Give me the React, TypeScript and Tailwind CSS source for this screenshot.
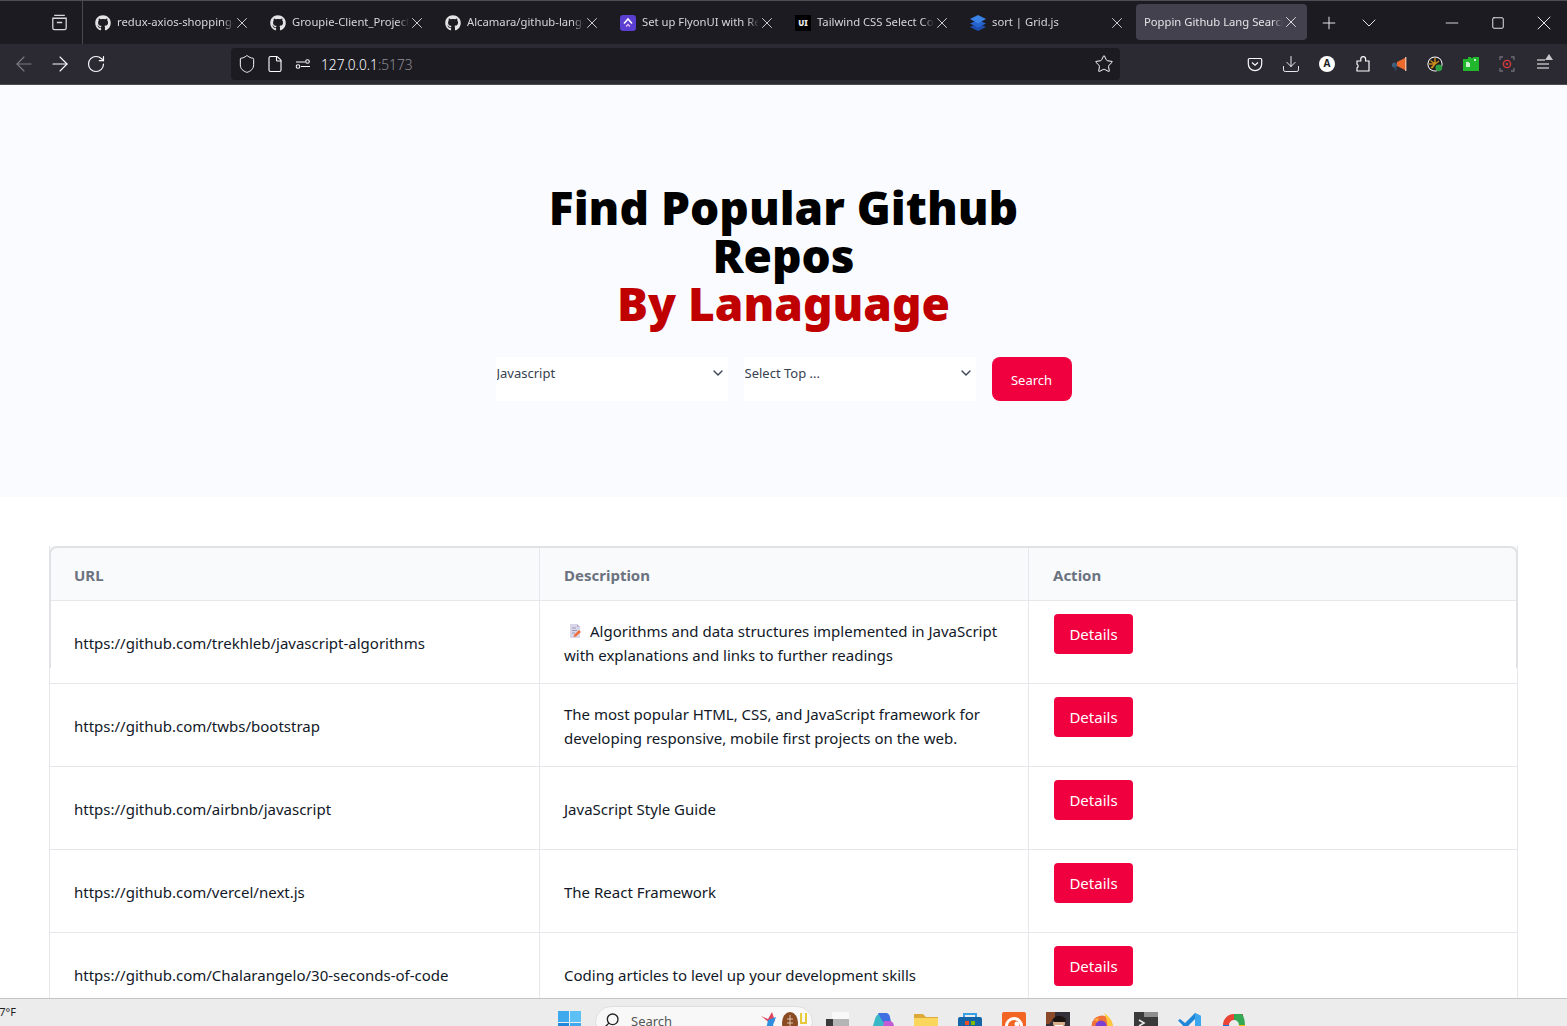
import React from 'react';
import { FaGithub } from 'react-icons/fa';
import {
  ArrowLeft,
  ArrowRight,
  ChevronDown,
  Download,
  File,
  Minus,
  Plus,
  RotateCw,
  Search,
  Shield,
  Square,
  Star,
  X,
} from 'lucide-react';

const fontClass = "font-['Noto_Sans','Open_Sans',sans-serif]";

const FlyonIcon = () => (
  <svg width="16" height="16" viewBox="0 0 16 16" className="shrink-0">
    <rect width="16" height="16" rx="3" fill="#5b3fd0" />
    <path d="M4 8.5 8 4l4 4.5" fill="none" stroke="#fff" strokeWidth="1.6" />
    <path d="M6 11.5 8 9.5l2 2" fill="none" stroke="#e6b8f5" strokeWidth="1.4" />
  </svg>
);

const UiIcon = () => (
  <span className="flex h-4 w-4 shrink-0 items-center justify-center bg-black text-[8px] font-black text-[#e8e8e8]">
    UI
  </span>
);

const GridIcon = () => (
  <svg width="16" height="16" viewBox="0 0 16 16" className="shrink-0">
    <path d="M8 8.5 0 12l8 4 8-4z" fill="#1d4fb0" />
    <path d="M8 5 0 8.5l8 4 8-4z" fill="#2563cf" />
    <path d="M8 0 0 4l8 4.5L16 4z" fill="#3b82e6" />
  </svg>
);

const tabs = [
  { title: 'redux-axios-shopping-cart', icon: <FaGithub className="h-4 w-4 shrink-0 text-[#e4e4e6]" /> },
  { title: 'Groupie-Client_Project', icon: <FaGithub className="h-4 w-4 shrink-0 text-[#e4e4e6]" /> },
  { title: 'Alcamara/github-lang-search', icon: <FaGithub className="h-4 w-4 shrink-0 text-[#e4e4e6]" /> },
  { title: 'Set up FlyonUI with React', icon: <FlyonIcon /> },
  { title: 'Tailwind CSS Select Component', icon: <UiIcon /> },
  { title: 'sort | Grid.js', icon: <GridIcon /> },
];

const repos = [
  {
    url: 'https://github.com/trekhleb/javascript-algorithms',
    description: 'Algorithms and data structures implemented in JavaScript with explanations and links to further readings',
    memo: true,
  },
  {
    url: 'https://github.com/twbs/bootstrap',
    description: 'The most popular HTML, CSS, and JavaScript framework for developing responsive, mobile first projects on the web.',
  },
  { url: 'https://github.com/airbnb/javascript', description: 'JavaScript Style Guide' },
  { url: 'https://github.com/vercel/next.js', description: 'The React Framework' },
  {
    url: 'https://github.com/Chalarangelo/30-seconds-of-code',
    description: 'Coding articles to level up your development skills',
  },
];

const Tabs = () => (
  <div className="flex h-[44px] shrink-0 border-t border-[#4d4d55] bg-[#1c1b22]">
    <div className="flex w-[87px] shrink-0 items-center">
      <div className="flex h-[43px] w-[83px] items-center justify-center border-r border-[#4a4950] pl-[37px]">
        <svg width="17" height="17" viewBox="0 0 16 16" fill="none" stroke="#d8d8dc" strokeWidth="1.2">
          <path d="M3 1.2h10M1.7 4h12.6v9.2a1.6 1.6 0 0 1-1.6 1.6H3.3a1.6 1.6 0 0 1-1.6-1.6zM5.5 8h5" />
        </svg>
      </div>
    </div>
    {tabs.map((tab) => (
      <div key={tab.title} className="flex h-[43px] w-[175px] shrink-0 items-center pl-2 text-[11.25px] text-[#d6d6da]">
        {tab.icon}
        <span className="ml-[6px] w-[117px] overflow-hidden whitespace-nowrap [mask-image:linear-gradient(to_right,black_90%,transparent)]">
          {tab.title}
        </span>
        <X className="-ml-px h-[18px] w-[18px] shrink-0" strokeWidth={1.25} />
      </div>
    ))}
    <div className="-ml-px mt-[3px] flex h-9 w-[171px] shrink-0 items-center rounded bg-[#42414d] pl-2 text-[11.25px] text-[#e4e4e8]">
      <span className="w-[139px] overflow-hidden whitespace-nowrap [mask-image:linear-gradient(to_right,black_92%,transparent)]">
        Poppin Github Lang Search
      </span>
      <X className="-ml-px h-[18px] w-[18px] shrink-0" strokeWidth={1.25} />
    </div>
    <div className="flex flex-1 items-center text-[#e4e4e8]">
      <Plus className="ml-3 h-5 w-5" strokeWidth={1.2} />
      <ChevronDown className="ml-[18px] h-6 w-6" strokeWidth={1} />
      <Minus className="ml-[61px] h-5 w-5" strokeWidth={1.1} />
      <Square className="ml-[29px] h-[14px] w-[14px]" strokeWidth={1.7} />
      <X className="ml-[27px] h-6 w-6" strokeWidth={1} />
    </div>
  </div>
);

const Toolbar = () => (
  <div className="flex h-[41px] shrink-0 items-center border-b border-[#4a4950] bg-[#2b2a33] pb-px text-[#fbfbfe]">
    <ArrowLeft className="ml-3 h-6 w-6 text-[#7c7b84]" strokeWidth={1.1} />
    <ArrowRight className="ml-3 h-6 w-6" strokeWidth={1.1} />
    <RotateCw className="ml-[14px] h-5 w-5" strokeWidth={1.4} />
    <div className="ml-[125px] flex h-8 w-[889px] items-center rounded bg-[#1c1b22] pl-[6px] pr-[6px]">
      <Shield className="h-5 w-5" strokeWidth={1.2} />
      <File className="ml-[9px] h-[18px] w-[18px]" strokeWidth={1.5} />
      <svg width="16" height="16" viewBox="0 0 16 16" fill="none" stroke="#fbfbfe" strokeWidth="1.1" className="ml-[11px]">
        <path d="M1 6h9M6 10.5h9" />
        <circle cx="12.5" cy="5.5" r="1.8" />
        <circle cx="3" cy="10.5" r="1.8" />
      </svg>
      <span className="ml-[10px] pt-[3px] text-[13.7px] font-light">
        127.0.0.1<span className="text-[#8f8f95]">:5173</span>
      </span>
      <Star className="ml-auto h-5 w-5" strokeWidth={1.2} />
    </div>
    <div className="ml-[127px] flex items-center gap-[20px]">
      <svg width="16" height="16" viewBox="0 0 16 16" fill="none" stroke="#fbfbfe" strokeWidth="1.2">
        <path d="M2.5 2.5h11A1.2 1.2 0 0 1 14.7 3.7V8A6.7 6.7 0 0 1 1.3 8V3.7a1.2 1.2 0 0 1 1.2-1.2z" />
        <path d="M5 6.5 8 9.3l3-2.8" />
      </svg>
      <Download className="-m-[2px] h-5 w-5" strokeWidth={1.1} />
      <span className="flex h-4 w-4 items-center justify-center rounded-full bg-white text-[10px] font-bold text-[#1c1b22]">A</span>
      <svg width="16" height="16" viewBox="0 0 16 16" fill="none" stroke="#fbfbfe" strokeWidth="1.2" className="overflow-visible">
        <path d="M2 5H5.8V3a2.4 2.4 0 0 1 4.8 0v2H14v10H2v-3.2a2 2 0 0 0 0-3.6z" />
      </svg>
      <svg width="16" height="16" viewBox="0 0 16 16">
        <path d="M6 6 14 2v12L6 10z" fill="#ee6a2c" />
        <rect x="14" y="1" width="1.4" height="14" fill="#f2b7a0" />
        <circle cx="3.5" cy="9" r="2.6" fill="#3d5d7a" />
        <rect x="3.5" y="10.5" width="2" height="4" fill="#2f4860" />
      </svg>
      <svg width="16" height="16" viewBox="0 0 16 16">
        <circle cx="8" cy="8" r="7.6" fill="#fff" />
        <circle cx="8" cy="8" r="6.6" fill="#1c1b22" />
        <path d="M8 2v6l4-3M2 8h6l-3 4M3.5 4.5 8 8M4 12l3-3" stroke="#c98a1e" strokeWidth="1.5" fill="none" />
        <circle cx="11.8" cy="11.8" r="3.4" fill="#2ea043" />
      </svg>
      <svg width="17" height="16" viewBox="0 0 17 16" className="-mr-px">
        <path d="M0 3h5V1h3v1h2V1h6v14H0z" fill="#21b82d" />
        <path d="M3 6h3v1h1v4H3zM11 3h2v2h-2z" fill="#c9f5cc" />
      </svg>
      <svg width="16" height="16" viewBox="0 0 16 16" fill="none">
        <path d="M1 4V1h3M12 1h3v3M15 12v3h-3M4 15H1v-3" stroke="#6f6e76" strokeWidth="1.3" />
        <circle cx="8" cy="8" r="3.6" stroke="#d83b3b" strokeWidth="1.4" />
        <circle cx="8" cy="8" r="1.2" fill="#d83b3b" />
      </svg>
      <svg width="16" height="16" viewBox="0 0 16 16" fill="none" className="overflow-visible">
        <path d="M2 4h8M2 8h12M2 12h12" stroke="#fbfbfe" strokeWidth="1.2" />
        <path d="M14 -2 18 4H10z" fill="#c8c8cc" />
      </svg>
    </div>
  </div>
);

const SelectBox = ({ label }: { label: string }) => (
  <div className="relative h-11 w-[232px]">
    <select className="h-11 w-full appearance-none bg-white pb-[10px] pl-px text-[13px] text-[#374151] outline-none">
      <option>{label}</option>
    </select>
    <ChevronDown className="pointer-events-none absolute right-[2px] top-2 h-4 w-4 text-[#374151]" strokeWidth={2} />
  </div>
);

const Hero = () => (
  <section className="flex flex-col items-center bg-[#fafbfe] pb-[96px] pt-[98px]">
    <h1 className="w-[576px] text-center text-[46px] font-black leading-[48px] text-black">
      Find Popular Github Repos
      <br />
      <span className="text-[#c00000]">By Lanaguage</span>
    </h1>
    <div className="mt-[30px] flex gap-4">
      <SelectBox label="Javascript" />
      <SelectBox label="Select Top ..." />
      <button className="h-11 w-20 rounded-lg bg-[#f0003f] pt-1 text-[13px] text-white">Search</button>
    </div>
  </section>
);

const MemoIcon = () => (
  <svg width="14" height="16" viewBox="2 0 12 16" className="ml-1 mr-2 inline-block align-[-2px]">
    <path d="M3 1h7l3 3v11H3z" fill="#d9d6e8" />
    <path d="M10 1l3 3h-3z" fill="#b5b1cc" />
    <path d="M5 5h4M5 7.5h5M5 10h3" stroke="#9e9ab5" strokeWidth="1" />
    <path d="M7 12l5-5 2 2-5 4.5-2.4.6z" fill="#f0703c" />
  </svg>
);

const RepoTable = () => (
  <div className="relative mx-[49px] mt-[49px]">
    <div className="pointer-events-none absolute inset-x-0 top-0 h-[122px] rounded-t-lg border-x-2 border-t-2 border-[#e0e2e6]" />
    <table className="w-full table-fixed border-x border-[#e5e7eb] text-[15px] text-[#111827]">
      <thead>
        <tr className="h-[54px] border-b border-[#e5e7eb] bg-[#f9fafc] text-left font-bold text-[#6b7280]">
          <th className="w-[490px] px-6 pt-1">URL</th>
          <th className="w-[489px] border-l border-[#e5e7eb] px-6 pt-1">Description</th>
          <th className="border-l border-[#e5e7eb] px-6 pt-1">Action</th>
        </tr>
      </thead>
      <tbody>
        {repos.map((repo) => (
          <tr key={repo.url} className="h-[83px] border-b border-[#e5e7eb]">
            <td className="px-6 pt-1">{repo.url}</td>
            <td className="border-l border-[#e5e7eb] px-6 pt-[2px] leading-6">
              {repo.memo && <MemoIcon />}
              {repo.description}
            </td>
            <td className="border-l border-[#e5e7eb] px-6 pb-[29px] pt-[13px] align-top">
              <button className="ml-px h-10 w-[79px] rounded bg-[#f0003f] pt-[2px] text-white">Details</button>
            </td>
          </tr>
        ))}
      </tbody>
    </table>
  </div>
);

const taskbarIcons = [
  <svg key="view" width="24" height="24" viewBox="0 0 24 24">
    <rect x="6" y="0" width="17" height="16" fill="#f8f8f8" />
    <rect x="0" y="7" width="16" height="17" fill="#3b3b3b" />
    <rect x="7" y="7" width="16" height="17" fill="#b5b5b5" />
  </svg>,
  <svg key="copilot" width="24" height="24" viewBox="0 0 24 24">
    <path d="M0 24 5 7q2-6 7-6h5l-6 23z" fill="#3ab8c8" />
    <path d="M2 16h10l-2 8H0z" fill="#8ccf4d" />
    <path d="M8 1h8q3 0 4 4l1 5H13z" fill="#3f6fe0" />
    <path d="M14 9h5q5 0 5 6v9H12z" fill="#c25bd6" />
  </svg>,
  <svg key="folder" width="24" height="24" viewBox="0 0 24 24">
    <path d="M0 2h9l3 3h12v19H0z" fill="#dca93a" />
    <rect x="0" y="6" width="24" height="18" fill="#fad65c" />
  </svg>,
  <svg key="store" width="24" height="24" viewBox="0 0 24 24">
    <path d="M6 5V2h12v3" fill="none" stroke="#3aa0e6" strokeWidth="2" />
    <rect x="0" y="5" width="24" height="19" rx="2" fill="#1464a8" />
    <rect x="7" y="9" width="4" height="4" fill="#f25022" />
    <rect x="13" y="9" width="4" height="4" fill="#7fba00" />
    <rect x="7" y="14" width="4" height="4" fill="#00a4ef" />
    <rect x="13" y="14" width="4" height="4" fill="#ffb900" />
  </svg>,
  <svg key="crunchy" width="24" height="24" viewBox="0 0 24 24">
    <rect width="24" height="24" rx="2" fill="#f26522" />
    <circle cx="12" cy="14" r="7.5" fill="none" stroke="#fff" strokeWidth="3" />
    <circle cx="15" cy="12" r="2.5" fill="#fff" />
  </svg>,
  <svg key="photo" width="24" height="24" viewBox="0 0 24 24">
    <rect width="24" height="24" fill="#33303a" />
    <path d="M0 0h9v6l-6 6H0z" fill="#8a4a2a" />
    <circle cx="13" cy="11" r="6" fill="#d9b08c" />
    <path d="M6 8q6-8 14-1l-1 3H8z" fill="#1c1412" />
    <path d="M9 13h8v1.5H9z" fill="#fff" />
    <path d="M4 18h18v6H4z" fill="#6c3a2e" />
  </svg>,
  <svg key="firefox" width="24" height="24" viewBox="0 0 24 24">
    <circle cx="12" cy="14" r="10.5" fill="#f0713a" />
    <path d="M14 1q8 5 9 13l-6 2q1-8-3-15z" fill="#ffc83d" />
    <path d="M4 8q2-2 5-2-2 2-1 4z" fill="#ffae3b" />
    <circle cx="11" cy="14" r="5.5" fill="#7b3fd4" />
  </svg>,
  <svg key="terminal" width="24" height="24" viewBox="0 0 24 24">
    <rect width="24" height="24" rx="2" fill="#3a3a3a" />
    <rect width="24" height="5" fill="#8e8e8e" />
    <rect width="10" height="5" fill="#3a3a3a" />
    <path d="M5 8l5 3-5 3" fill="none" stroke="#e8e8e8" strokeWidth="1.6" />
  </svg>,
  <svg key="vscode" width="24" height="24" viewBox="0 0 24 24">
    <path d="M17 1 7 11 2 7 0 8.5 5 13.5 0 18.5 2 20l5-4 10 8 6-3V4z" fill="#1f86d8" />
    <path d="M17 1l6 3v17l-6 3z" fill="#3ba7ee" />
    <path d="M17 7v13l-6.5-6.5z" fill="#ececec" />
  </svg>,
  <svg key="chrome" width="24" height="24" viewBox="0 0 24 24">
    <path d="M1 13a11 11 0 0 1 11-11h9v6h-9a5 5 0 0 0-5 5z" fill="#ea4335" />
    <path d="M12 2h8q3 4 3 11h-6a5 5 0 0 0-5-5z" fill="#34a853" />
    <path d="M1 13h6a5 5 0 0 0 5 5v6A11 11 0 0 1 1 13z" fill="#1a73e8" />
    <path d="M12 24v-6a5 5 0 0 0 5-5h6a11 11 0 0 1-11 11z" fill="#fbbc05" />
  </svg>,
];

const Taskbar = () => (
  <div className="flex h-[28px] shrink-0 overflow-hidden border-t border-[#c4c4c4] bg-[#ececec] text-[#1f1f1f]">
    <div className="w-[558px] shrink-0 overflow-hidden pt-[5px] text-[11px] leading-[16px]">
      <span className="-ml-[7px] inline-block">77°F</span>
    </div>
    <svg width="24" height="24" viewBox="0 0 24 24" className="mt-[12px] shrink-0">
      <rect x="0" y="0" width="11" height="11" fill="#3fa9ee" />
      <rect x="12" y="0" width="11" height="11" fill="#5cc0f5" />
      <rect x="0" y="12" width="11" height="11" fill="#1f88dc" />
      <rect x="12" y="12" width="11" height="11" fill="#3fa9ee" />
    </svg>
    <div className="ml-[13px] mt-[7px] flex h-8 w-[218px] shrink-0 items-start rounded-full border border-[#dedede] bg-[#f8f8f8] pl-[8px] pt-[5px]">
      <Search className="h-4 w-4 -scale-x-100 text-[#222]" strokeWidth={2} />
      <span className="ml-[11px] text-[13px] leading-[18px] text-[#555]">Search</span>
      <svg width="50" height="24" viewBox="0 0 50 24" className="ml-auto mr-[2px] -mt-[1px]">
        <path d="M1 5 8 8 12 1 15 10l-5 2-4-3z" fill="#e0455c" />
        <path d="M8 9 16 6 13 14l4 8-8-5-5 5 3-8z" fill="#2e8fe0" />
        <ellipse cx="30" cy="12" rx="8" ry="11" fill="#8a4a22" />
        <path d="M30 4v16M27 8h6M27 12h6M27 16h6" stroke="#f0e0d0" strokeWidth="0.8" />
        <path d="M41 2v10h5V2" fill="none" stroke="#e8c93c" strokeWidth="2" />
      </svg>
    </div>
    <div className="ml-[13px] mt-[13px] flex gap-[20px]">
      {taskbarIcons.map((icon) => (
        <span key={icon.key} className="h-6 w-6 shrink-0">
          {icon}
        </span>
      ))}
    </div>
  </div>
);

const App = () => (
  <div className={`flex h-screen flex-col overflow-hidden bg-white ${fontClass}`}>
    <Tabs />
    <Toolbar />
    <main className="min-h-0 flex-1 overflow-hidden">
      <Hero />
      <RepoTable />
    </main>
    <Taskbar />
  </div>
);

export default App;
